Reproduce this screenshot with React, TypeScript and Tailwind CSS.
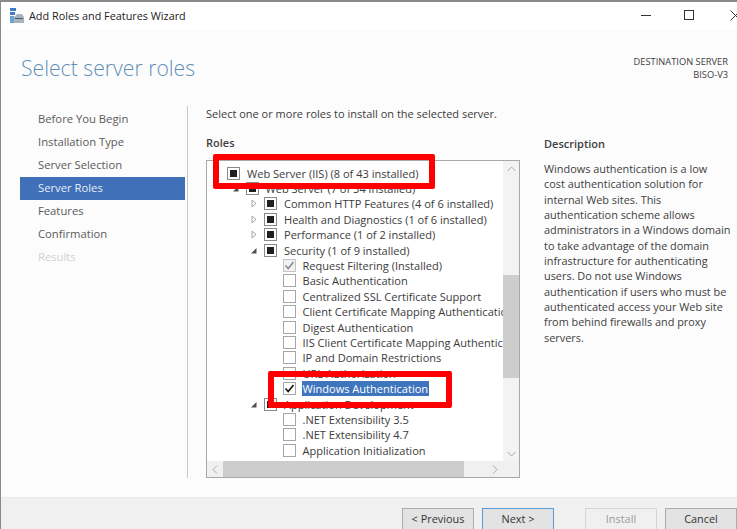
import React from "react";

const FONT = "[font-family:'Open_Sans','Noto_Sans',sans-serif]";

function Box({ kind }: { kind: "none" | "partial" | "check" | "installed" }) {
  const border = kind === "installed" ? "border-[#c4c4c4] bg-[#f2f2f2]" : kind === "partial" ? "border-[#8a8a8a] bg-white" : "border-[#a6a6a6] bg-white";
  return (
    <span className={`relative flex h-[13px] w-[13px] shrink-0 items-center justify-center border ${border}`}>
      {kind === "partial" && <span className="h-[7px] w-[7px] bg-[#202020]" />}
      {kind === "check" && (
        <svg width="11" height="11" viewBox="0 0 11 11" fill="none" stroke="#111" strokeWidth="1.6">
          <path d="M1.5 5.5 L4.2 8.5 L9.5 2" />
        </svg>
      )}
      {kind === "installed" && (
        <svg width="11" height="11" viewBox="0 0 11 11" fill="none" stroke="#8c8c8c" strokeWidth="1.6">
          <path d="M1.5 5.5 L4.2 8.5 L9.5 2" />
        </svg>
      )}
    </span>
  );
}

function Arrow({ open }: { open?: boolean }) {
  return (
    <svg width="8" height="9" viewBox="0 0 8 9" className="shrink-0">
      {open ? <path d="M6.5 2 V7.5 H1 Z" fill="#505050" /> : <path d="M2 1 L6 4.5 L2 8 Z" fill="white" stroke="#a6a6a6" strokeWidth="1" />}
    </svg>
  );
}

type Row = { level: number; text: string; kind: "none" | "partial" | "check" | "installed"; arrow?: "open" | "closed"; selected?: boolean };

const rows: Row[] = [
  { level: 0, text: "Web Server (IIS) (8 of 43 installed)", kind: "partial" },
  { level: 1, text: "Web Server (7 of 34 installed)", kind: "partial", arrow: "open" },
  { level: 2, text: "Common HTTP Features (4 of 6 installed)", kind: "partial", arrow: "closed" },
  { level: 2, text: "Health and Diagnostics (1 of 6 installed)", kind: "partial", arrow: "closed" },
  { level: 2, text: "Performance (1 of 2 installed)", kind: "partial", arrow: "closed" },
  { level: 2, text: "Security (1 of 9 installed)", kind: "partial", arrow: "open" },
  { level: 3, text: "Request Filtering (Installed)", kind: "installed" },
  { level: 3, text: "Basic Authentication", kind: "none" },
  { level: 3, text: "Centralized SSL Certificate Support", kind: "none" },
  { level: 3, text: "Client Certificate Mapping Authentication", kind: "none" },
  { level: 3, text: "Digest Authentication", kind: "none" },
  { level: 3, text: "IIS Client Certificate Mapping Authentication", kind: "none" },
  { level: 3, text: "IP and Domain Restrictions", kind: "none" },
  { level: 3, text: "URL Authorization", kind: "none" },
  { level: 3, text: "Windows Authentication", kind: "check", selected: true },
  { level: 2, text: "Application Development", kind: "partial", arrow: "open" },
  { level: 3, text: ".NET Extensibility 3.5", kind: "none" },
  { level: 3, text: ".NET Extensibility 4.7", kind: "none" },
  { level: 3, text: "Application Initialization", kind: "none" },
];

const indent = ["pl-[20px]", "pl-[38.5px]", "pl-[57px]", "pl-[75.5px]"];

function TreeRow({ row }: { row: Row }) {
  return (
    <div className={`flex h-[15.4px] items-center whitespace-nowrap ${indent[row.level]}`}>
      <span className="relative flex items-center">
        {row.arrow && (
          <span className="absolute left-[-14px] top-[2px]">
            <Arrow open={row.arrow === "open"} />
          </span>
        )}
        <Box kind={row.kind} />
      </span>
      <span className={`ml-[6px] px-px leading-[15px] ${row.selected ? "bg-[#3f75bd] text-white" : "text-[#3c3c3c]"}`}>{row.text}</span>
    </div>
  );
}

const nav = ["Before You Begin", "Installation Type", "Server Selection", "Server Roles", "Features", "Confirmation", "Results"];

function Chevron({ d }: { d: string }) {
  return (
    <svg width="9" height="9" viewBox="0 0 9 9" fill="none" stroke="#a8a8a8" strokeWidth="1">
      <path d={d} />
    </svg>
  );
}

function Btn({ children, cls }: { children: React.ReactNode; cls: string }) {
  return <div className={`flex h-[22px] w-[72px] items-center justify-center border text-[10.9px] ${cls}`}>{children}</div>;
}

export default function App() {
  return (
    <div className={`relative flex h-[529px] w-[737px] flex-col overflow-hidden border-l border-t-2 border-[#8a8a8a] bg-[#fcfcfc] text-[11px] text-[#444] ${FONT}`}>
      <div className="flex h-[28px] shrink-0 items-center bg-white pl-[9px]">
        <svg width="14" height="16" viewBox="0 0 14 16" className="shrink-0">
          <rect x="0" y="0" width="6" height="3" fill="#3f7fc1" />
          <rect x="0" y="4" width="5" height="3" fill="#3f7fc1" />
          <rect x="0" y="8" width="4" height="7" fill="#6fa3d3" />
          <path d="M4 9 L7 6 H12 L14 9 V15 H4 Z" fill="#a9b4bd" />
          <rect x="5" y="10" width="8" height="1" fill="#4a5a68" />
        </svg>
        <span className="ml-[5px] text-[10.85px] text-[#222]">Add Roles and Features Wizard</span>
        <div className="ml-auto mr-[-4px] mt-[-2px] flex items-center">
          <span className="h-px w-[10px] bg-[#333]" />
          <span className="ml-[33px] h-[10px] w-[10px] border border-[#333]" />
          <svg width="11" height="11" viewBox="0 0 11 11" className="ml-[36px]" stroke="#333" fill="none">
            <path d="M0.5 0.5 L10.5 10.5 M10.5 0.5 L0.5 10.5" />
          </svg>
        </div>
      </div>

      <div className="flex h-[76px] shrink-0 items-start justify-between pl-[20px] pr-[9px]">
        <div className="mt-[23px] text-[21.2px] font-light leading-[30px] text-[#5f90b8]">Select server roles</div>
        <div className="mt-[25px] text-right text-[9.3px] leading-[13px] text-[#404040]">
          <div>DESTINATION SERVER</div>
          <div>BISO-V3</div>
        </div>
      </div>

      <div className="flex min-h-0 flex-1">
        <div className="w-[185px] shrink-0 pl-[19px] pr-px pt-[1.5px] text-[11.25px]">
          {nav.map((n) => (
            <div
              key={n}
              className={`flex h-[23px] items-center pl-[18px] ${n === "Server Roles" ? "bg-[#3f70b8] text-[#e8eef8]" : n === "Results" ? "text-[#d2d2d2]" : "text-[#5a5a5a]"}`}
            >
              {n}
            </div>
          ))}
        </div>
        <div className="ml-[1px] h-[372px] w-px shrink-0 bg-[#c8c8c8]" />
        <div className="flex min-w-0 flex-1 pl-[18px]">
          <div className="w-[338px] shrink-0">
            <div className="h-[27px] whitespace-nowrap leading-[16px] text-[#3c3c3c]">Select one or more roles to install on the selected server.</div>
            <div className="h-[27px] pt-[2px] font-semibold leading-[16px] text-[#404040]">Roles</div>
            <div className="flex h-[318px] w-[314px] flex-col border border-[#a8a8a8] bg-white">
              <div className="flex min-h-0 flex-1">
                <div className="min-w-0 flex-1 overflow-hidden pt-[4.5px] text-[11.05px]">
                  {rows.map((r) => (
                    <TreeRow key={r.text} row={r} />
                  ))}
                </div>
                <div className="flex w-[16px] shrink-0 flex-col bg-[#f3f3f3]">
                  <div className="flex h-[16px] items-center justify-center"><Chevron d="M0.5 6 L4.5 2 L8.5 6" /></div>
                  <div className="h-[98px]" />
                  <div className="h-[103px] bg-[#cdcdcd]" />
                  <div className="flex-1" />
                  <div className="flex h-[16px] items-center justify-center"><Chevron d="M0.5 3 L4.5 7 L8.5 3" /></div>
                </div>
              </div>
              <div className="flex h-[16px] shrink-0 bg-[#f0f0f0]">
                <div className="flex w-[16px] items-center justify-center"><Chevron d="M6 0.5 L2 4.5 L6 8.5" /></div>
                <div className="w-[241px] bg-[#cdcdcd]" />
                <div className="flex flex-1 items-center justify-end pr-[20px]"><Chevron d="M3 0.5 L7 4.5 L3 8.5" /></div>
              </div>
            </div>
          </div>
          <div className="w-[190px] shrink-0 text-[#404040]">
            <div className="mt-[30px] h-[20px] font-semibold leading-[16px]">Description</div>
            <p className="mt-[5px] whitespace-nowrap text-[10.9px] leading-[15.35px]">
              Windows authentication is a low<br />
              cost authentication solution for<br />
              internal Web sites. This<br />
              authentication scheme allows<br />
              administrators in a Windows domain<br />
              to take advantage of the domain<br />
              infrastructure for authenticating<br />
              users. Do not use Windows<br />
              authentication if users who must be<br />
              authenticated access your Web site<br />
              from behind firewalls and proxy<br />
              servers.
            </p>
          </div>
        </div>
      </div>

      <div className="flex h-[32px] shrink-0 items-start border-t border-[#e8e8e8] bg-[#f0f0f0] pl-[401px] pt-[10px]">
        <Btn cls="border-[#ababab] bg-[#e3e3e3] text-[#333]">&lt; Previous</Btn>
        <Btn cls="ml-[8px] border-[#5b9bd8] bg-[#e3e3e3] text-[#333]">Next &gt;</Btn>
        <Btn cls="ml-[31px] border-[#d6d6d6] bg-[#f0f0f0] text-[#9a9a9a]">Install</Btn>
        <Btn cls="ml-[8px] border-[#ababab] bg-[#e3e3e3] text-[#333]">Cancel</Btn>
      </div>

      <div className="absolute left-[212px] top-[152px] h-[35px] w-[222px] rounded-[2px] border-[6px] border-[#ff0000]" />
      <div className="absolute left-[267px] top-[369px] h-[37px] w-[184px] rounded-[2px] border-[6px] border-[#ff0000]" />
    </div>
  );
}
